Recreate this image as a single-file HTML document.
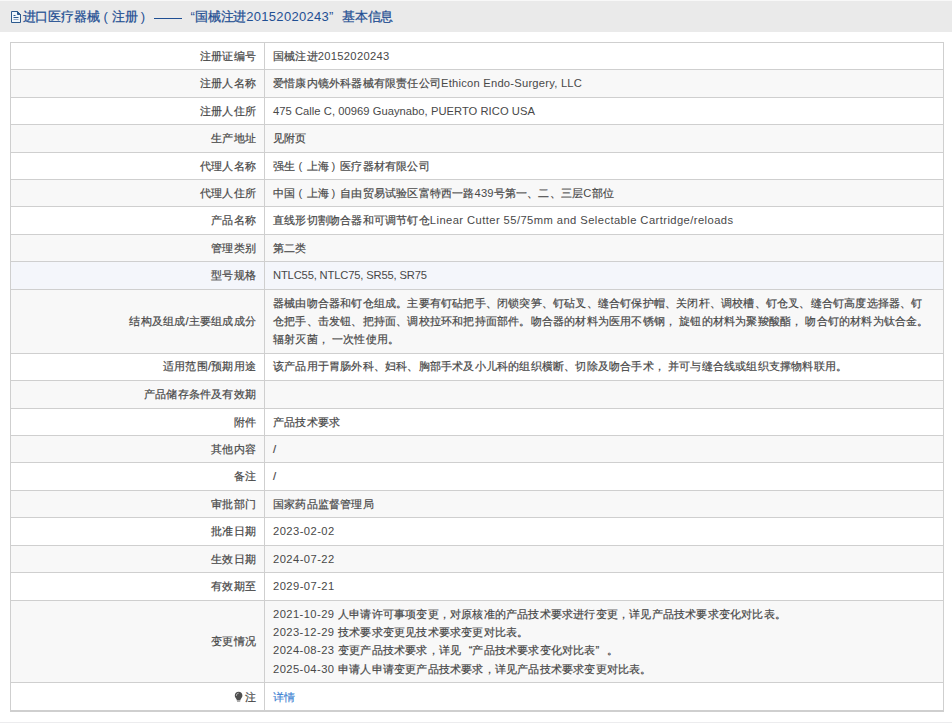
<!DOCTYPE html>
<html><head><meta charset="utf-8"><style>
html,body{margin:0;padding:0;background:#fff;width:952px;height:723px;overflow:hidden;position:relative}
body{font-family:"Liberation Sans",sans-serif;color:#484848}
.a{position:absolute}
.t{position:absolute;font-size:11.2px;line-height:18px;white-space:nowrap;letter-spacing:.2px;-webkit-text-stroke:0.2px #484848}
.t span[style*=letter-spacing]{-webkit-text-stroke:0}
.l{text-align:right;left:10px;width:246px}
.v{left:273px}
.lq,.rq,.cs{display:inline-block;width:11.2px;letter-spacing:0}
.lq{text-align:right}
.cs{width:14.2px}
.pl,.pr{display:inline-block;width:11.2px;letter-spacing:0;-webkit-text-stroke:0}
.pl{padding-left:3px;width:8.2px}
.pr{padding-left:2.5px;width:8.7px}
</style></head><body>

<div class="a" style="left:0;top:0;width:952px;height:32px;background:#eaeaea"></div>
<div class="a" style="left:0;top:0;width:952px;height:1px;background:#f8f8f8"></div>
<svg class="a" style="left:0;top:0" width="24" height="26" viewBox="0 0 24 26"><path d="M11.5 11.5H17.5L20.5 14.5V22.5H11.5Z" fill="#eef5fb" stroke="#2d5a8e" stroke-width="1" stroke-linejoin="round"/><path d="M17.5 11.5V14.5H20.5Z" fill="#2d5a8e" stroke="#2d5a8e" stroke-width="1"/><path d="M13.5 15.5H15.5M13.5 17.5H18.5" stroke="#2d5a8e" stroke-width="1"/><path d="M13.5 19.5H18.5" stroke="#8fa3bd" stroke-width="1"/></svg>
<div class="t" style="left:22.5px;top:8px;font-size:13px;line-height:18px;color:#1f4f93;letter-spacing:-0.15px;-webkit-text-stroke:0.25px #1f4f93">进口医疗器械<span style="display:inline-block;width:8.85px;padding-left:4px;letter-spacing:0;-webkit-text-stroke:0">(</span>注册<span style="display:inline-block;width:10.35px;padding-left:2.5px;letter-spacing:0;-webkit-text-stroke:0">)</span></div>
<div class="a" style="left:154px;top:18px;width:28px;height:1px;background:#1f4f93"></div>
<div class="t" style="left:182px;top:8px;font-size:13px;line-height:18px;color:#1f4f93;letter-spacing:-0.15px;-webkit-text-stroke:0.25px #1f4f93"><span style="display:inline-block;width:12.85px;text-align:right;letter-spacing:0">“</span>国械注进<span style="letter-spacing:0.3px">20152020243</span><span style="display:inline-block;width:12.85px;letter-spacing:0">”</span>基本信息</div>
<div class="a" style="left:10px;top:42px;width:933px;height:27px;background:#ffffff"></div>
<div class="t l" style="top:47px">注册证编号</div>
<div class="t v" style="top:47px">国械注进<span style="letter-spacing:0.29px">20152020243</span></div>
<div class="a" style="left:10px;top:69px;width:933px;height:28px;background:#f8f8f8"></div>
<div class="t l" style="top:74px">注册人名称</div>
<div class="t v" style="top:74px">爱惜康内镜外科器械有限责任公司<span style="letter-spacing:0.23px">Ethicon Endo-Surgery, LLC</span></div>
<div class="a" style="left:10px;top:97px;width:933px;height:27px;background:#ffffff"></div>
<div class="t l" style="top:102px">注册人住所</div>
<div class="t v" style="top:102px"><span style="letter-spacing:0.04px">475 Calle C, 00969 Guaynabo, PUERTO RICO USA</span></div>
<div class="a" style="left:10px;top:124px;width:933px;height:28px;background:#f8f8f8"></div>
<div class="t l" style="top:129px">生产地址</div>
<div class="t v" style="top:129px">见附页</div>
<div class="a" style="left:10px;top:152px;width:933px;height:27px;background:#ffffff"></div>
<div class="t l" style="top:157px">代理人名称</div>
<div class="t v" style="top:157px">强生<span class="pl">(</span>上海<span class="pr">)</span>医疗器材有限公司</div>
<div class="a" style="left:10px;top:179px;width:933px;height:27px;background:#f8f8f8"></div>
<div class="t l" style="top:184px">代理人住所</div>
<div class="t v" style="top:184px">中国<span class="pl">(</span>上海<span class="pr">)</span>自由贸易试验区富特西一路<span style="letter-spacing:0.1px">439</span>号第一、二、三层<span style="letter-spacing:0.6px">C</span>部位</div>
<div class="a" style="left:10px;top:206px;width:933px;height:28px;background:#ffffff"></div>
<div class="t l" style="top:211px">产品名称</div>
<div class="t v" style="top:211px">直线形切割吻合器和可调节钉仓<span style="letter-spacing:0.43px">Linear Cutter 55/75mm and Selectable Cartridge/reloads</span></div>
<div class="a" style="left:10px;top:234px;width:933px;height:27px;background:#f8f8f8"></div>
<div class="t l" style="top:239px">管理类别</div>
<div class="t v" style="top:239px">第二类</div>
<div class="a" style="left:10px;top:261px;width:933px;height:28px;background:#f4f6fb"></div>
<div class="t l" style="top:266px">型号规格</div>
<div class="t v" style="top:266px"><span style="letter-spacing:-0.16px">NTLC55, NTLC75, SR55, SR75</span></div>
<div class="a" style="left:10px;top:289px;width:933px;height:64px;background:#f8f8f8"></div>
<div class="t l" style="top:312px">结构及组成/主要组成成分</div>
<div class="t v" style="top:294px">器械由吻合器和钉仓组成。主要有钉砧把手、闭锁突笋、钉砧叉、缝合钉保护帽、关闭杆、调校槽、钉仓叉、缝合钉高度选择器、钉</div>
<div class="t v" style="top:312px">仓把手、击发钮、把持面、调校拉环和把持面部件。吻合器的材料为医用不锈钢<span class="cs">，</span>旋钮的材料为聚羧酸酯<span class="cs">，</span>吻合钉的材料为钛合金。</div>
<div class="t v" style="top:330px">辐射灭菌<span class="cs">，</span>一次性使用。</div>
<div class="a" style="left:10px;top:353px;width:933px;height:27px;background:#ffffff"></div>
<div class="t l" style="top:357px">适用范围/预期用途</div>
<div class="t v" style="top:357px">该产品用于胃肠外科、妇科、胸部手术及小儿科的组织横断、切除及吻合手术<span class="cs">，</span>并可与缝合线或组织支撑物料联用。</div>
<div class="a" style="left:10px;top:380px;width:933px;height:28px;background:#f8f8f8"></div>
<div class="t l" style="top:385px">产品储存条件及有效期</div>
<div class="a" style="left:10px;top:408px;width:933px;height:27px;background:#ffffff"></div>
<div class="t l" style="top:413px">附件</div>
<div class="t v" style="top:413px">产品技术要求</div>
<div class="a" style="left:10px;top:435px;width:933px;height:27px;background:#f8f8f8"></div>
<div class="t l" style="top:440px">其他内容</div>
<div class="t v" style="top:440px">/</div>
<div class="a" style="left:10px;top:462px;width:933px;height:28px;background:#ffffff"></div>
<div class="t l" style="top:467px">备注</div>
<div class="t v" style="top:467px">/</div>
<div class="a" style="left:10px;top:490px;width:933px;height:27px;background:#f8f8f8"></div>
<div class="t l" style="top:495px">审批部门</div>
<div class="t v" style="top:495px">国家药品监督管理局</div>
<div class="a" style="left:10px;top:517px;width:933px;height:28px;background:#ffffff"></div>
<div class="t l" style="top:522px">批准日期</div>
<div class="t v" style="top:522px"><span style="letter-spacing:0.44px">2023-02-02</span></div>
<div class="a" style="left:10px;top:545px;width:933px;height:27px;background:#f8f8f8"></div>
<div class="t l" style="top:550px">生效日期</div>
<div class="t v" style="top:550px"><span style="letter-spacing:0.44px">2024-07-22</span></div>
<div class="a" style="left:10px;top:572px;width:933px;height:28px;background:#ffffff"></div>
<div class="t l" style="top:577px">有效期至</div>
<div class="t v" style="top:577px"><span style="letter-spacing:0.44px">2029-07-21</span></div>
<div class="a" style="left:10px;top:600px;width:933px;height:82px;background:#f8f8f8"></div>
<div class="t l" style="top:632px">变更情况</div>
<div class="t v" style="top:605px"><span style="letter-spacing:0.42px">2021-10-29 </span>人申请许可事项变更，对原核准的产品技术要求进行变更，详见产品技术要求变化对比表。</div>
<div class="t v" style="top:623px"><span style="letter-spacing:0.42px">2023-12-29 </span>技术要求变更见技术要求变更对比表。</div>
<div class="t v" style="top:641px"><span style="letter-spacing:0.42px">2024-08-23 </span>变更产品技术要求，详见<span class="lq">“</span>产品技术要求变化对比表<span class="rq">”</span>。</div>
<div class="t v" style="top:660px"><span style="letter-spacing:0.42px">2025-04-30 </span>申请人申请变更产品技术要求，详见产品技术要求变更对比表。</div>
<div class="a" style="left:10px;top:682px;width:933px;height:28px;background:#ffffff"></div>
<div class="t l" style="top:688px">注</div>
<div class="t v" style="top:688px"><span style="color:#3d82d2;-webkit-text-stroke:0.15px #3d82d2">详情</span></div>
<svg class="a" style="left:233px;top:690px" width="11" height="14" viewBox="0 0 11 14"><path d="M5.6 1.8C3.4 1.8 1.8 3.5 1.8 5.6C1.8 7 2.5 7.9 3.2 8.7C3.6 9.2 3.8 9.7 3.8 10.4H7.4C7.4 9.7 7.6 9.2 8 8.7C8.7 7.9 9.4 7 9.4 5.6C9.4 3.5 7.8 1.8 5.6 1.8Z" fill="#4f4f4f"/><path d="M4 11.2H7.2V11.9H4Z" fill="#8a8a8a"/><path d="M3.4 5.4C3.4 4.2 4.2 3.4 5.2 3.3" fill="none" stroke="#d8d8d8" stroke-width="0.8" stroke-linecap="round"/></svg>
<div class="a" style="left:10px;top:42px;width:934px;height:1px;background:#cfcfcf"></div>
<div class="a" style="left:10px;top:69px;width:934px;height:1px;background:#cfcfcf"></div>
<div class="a" style="left:10px;top:97px;width:934px;height:1px;background:#cfcfcf"></div>
<div class="a" style="left:10px;top:124px;width:934px;height:1px;background:#cfcfcf"></div>
<div class="a" style="left:10px;top:152px;width:934px;height:1px;background:#cfcfcf"></div>
<div class="a" style="left:10px;top:179px;width:934px;height:1px;background:#cfcfcf"></div>
<div class="a" style="left:10px;top:206px;width:934px;height:1px;background:#cfcfcf"></div>
<div class="a" style="left:10px;top:234px;width:934px;height:1px;background:#cfcfcf"></div>
<div class="a" style="left:10px;top:261px;width:934px;height:1px;background:#cfcfcf"></div>
<div class="a" style="left:10px;top:289px;width:934px;height:1px;background:#cfcfcf"></div>
<div class="a" style="left:10px;top:353px;width:934px;height:1px;background:#cfcfcf"></div>
<div class="a" style="left:10px;top:380px;width:934px;height:1px;background:#cfcfcf"></div>
<div class="a" style="left:10px;top:408px;width:934px;height:1px;background:#cfcfcf"></div>
<div class="a" style="left:10px;top:435px;width:934px;height:1px;background:#cfcfcf"></div>
<div class="a" style="left:10px;top:462px;width:934px;height:1px;background:#cfcfcf"></div>
<div class="a" style="left:10px;top:490px;width:934px;height:1px;background:#cfcfcf"></div>
<div class="a" style="left:10px;top:517px;width:934px;height:1px;background:#cfcfcf"></div>
<div class="a" style="left:10px;top:545px;width:934px;height:1px;background:#cfcfcf"></div>
<div class="a" style="left:10px;top:572px;width:934px;height:1px;background:#cfcfcf"></div>
<div class="a" style="left:10px;top:600px;width:934px;height:1px;background:#cfcfcf"></div>
<div class="a" style="left:10px;top:682px;width:934px;height:1px;background:#cfcfcf"></div>
<div class="a" style="left:10px;top:710px;width:934px;height:1px;background:#cfcfcf"></div>
<div class="a" style="left:10px;top:711px;width:934px;height:1px;background:#cfcfcf"></div>
<div class="a" style="left:10px;top:42px;width:1px;height:670px;background:#cfcfcf"></div>
<div class="a" style="left:943px;top:42px;width:1px;height:670px;background:#cfcfcf"></div>
<div class="a" style="left:264px;top:42px;width:1px;height:669px;background:#cfcfcf"></div>
<div class="a" style="left:0;top:722px;width:952px;height:1px;background:#ececee"></div>
</body></html>
